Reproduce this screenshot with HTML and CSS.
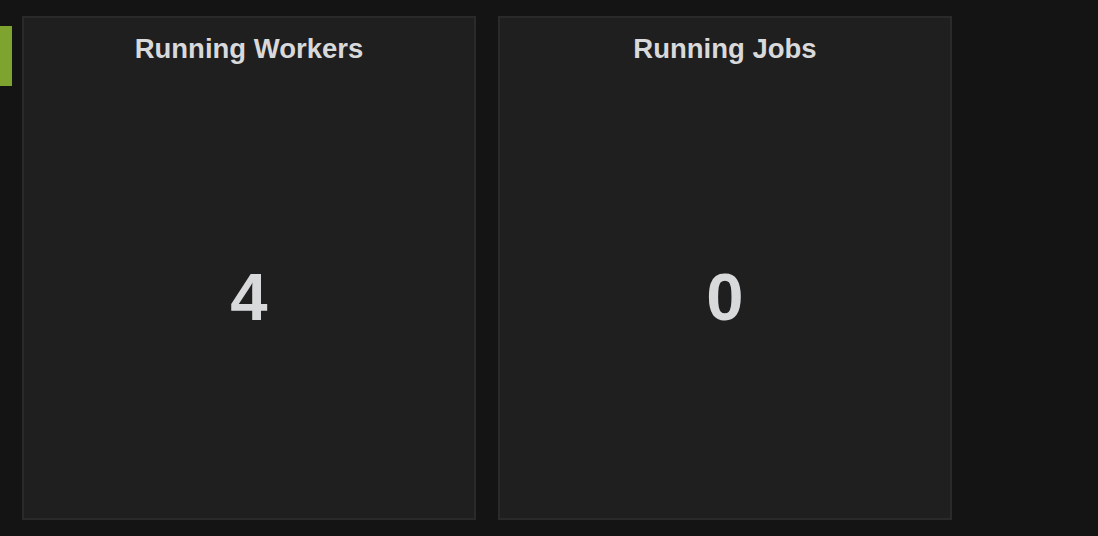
FILE: index.html
```html
<!DOCTYPE html>
<html>
<head>
<meta charset="utf-8">
<link rel="stylesheet" href="styles.css">
</head>
<body>
<div class="row">
  <div class="marker"></div>
  <div class="panels">
    <div class="panel">
      <div class="panel-title">Running Workers</div>
      <div class="panel-value">4</div>
    </div>
    <div class="panel">
      <div class="panel-title">Running Jobs</div>
      <div class="panel-value">0</div>
    </div>
  </div>
</div>
</body>
</html>
```
FILE: styles.css
```css
html, body {
  margin: 0;
  padding: 0;
  background: #141414;
  width: 1098px;
  height: 536px;
  overflow: hidden;
  font-family: "Liberation Sans", Arial, Helvetica, sans-serif;
}
.row {
  display: flex;
  align-items: flex-start;
}
.marker {
  width: 12px;
  height: 60px;
  margin-top: 26px;
  background: #7ea32e;
}
.panels {
  display: flex;
  gap: 22px;
  margin-left: 10px;
  margin-top: 16px;
}
.panel {
  box-sizing: border-box;
  width: 454px;
  height: 504px;
  background: #201f20;
  border: 2px solid #2a2a2a;
  display: flex;
  flex-direction: column;
  padding-top: 17px;
}
.panel-title {
  text-align: center;
  font-size: 27.5px;
  line-height: 1;
  font-weight: bold;
  color: #d8d9da;
}
.panel-value {
  flex: 1;
  display: flex;
  align-items: center;
  justify-content: center;
  padding-top: 12px;
  font-size: 67px;
  line-height: 1;
  font-weight: bold;
  color: #d8d9da;
}
```
